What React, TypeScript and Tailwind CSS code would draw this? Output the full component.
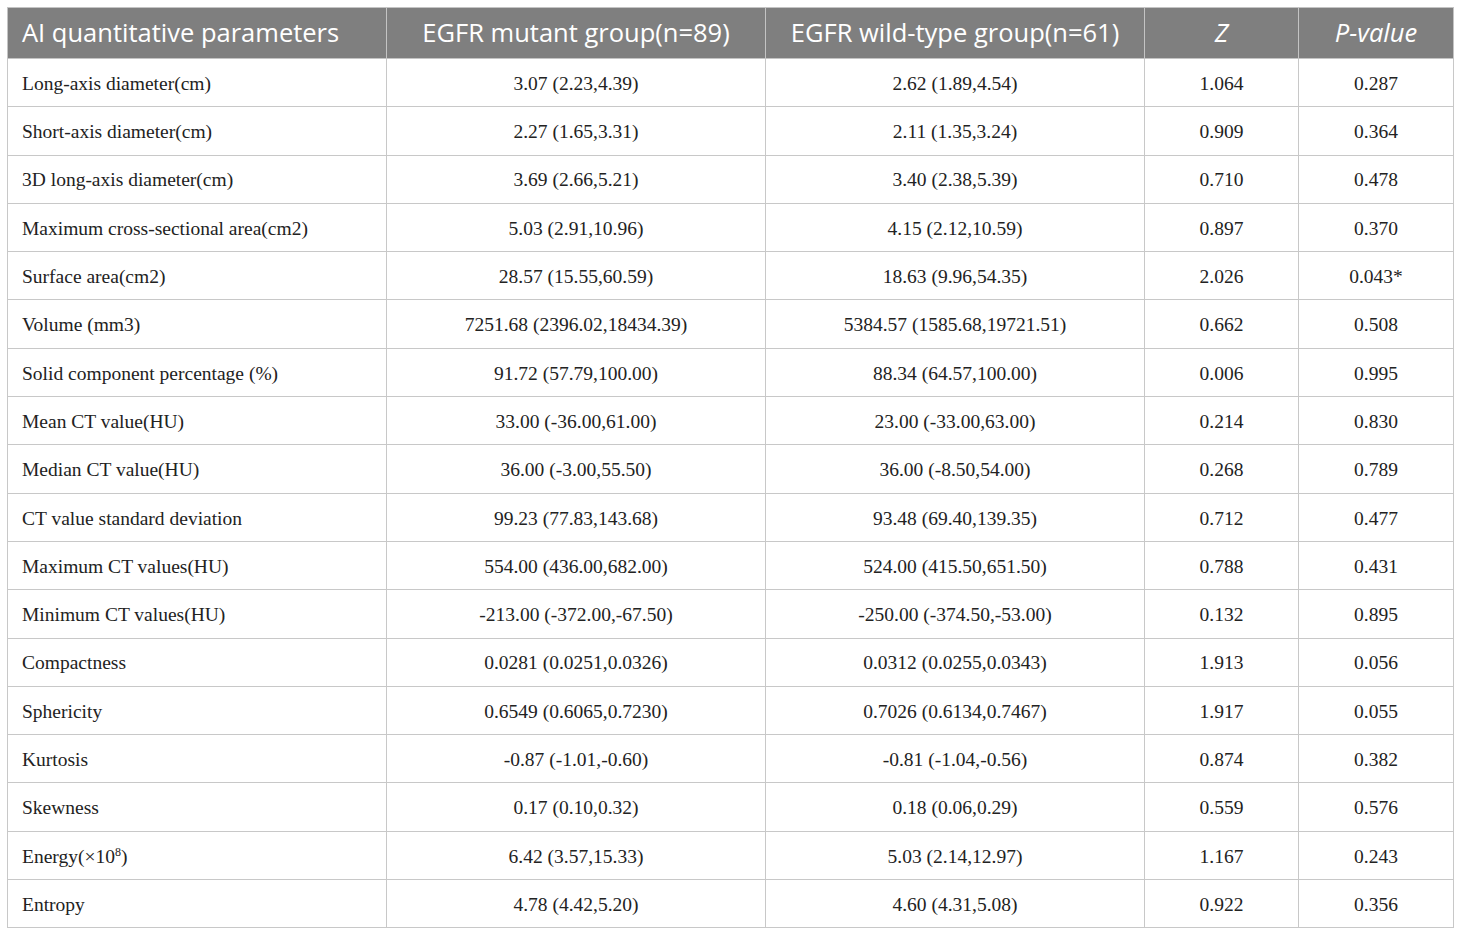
import React from "react";

const rows: [React.ReactNode, string, string, string, string][] = [
  ["Long-axis diameter(cm)", "3.07 (2.23,4.39)", "2.62 (1.89,4.54)", "1.064", "0.287"],
  ["Short-axis diameter(cm)", "2.27 (1.65,3.31)", "2.11 (1.35,3.24)", "0.909", "0.364"],
  ["3D long-axis diameter(cm)", "3.69 (2.66,5.21)", "3.40 (2.38,5.39)", "0.710", "0.478"],
  ["Maximum cross-sectional area(cm2)", "5.03 (2.91,10.96)", "4.15 (2.12,10.59)", "0.897", "0.370"],
  ["Surface area(cm2)", "28.57 (15.55,60.59)", "18.63 (9.96,54.35)", "2.026", "0.043*"],
  ["Volume (mm3)", "7251.68 (2396.02,18434.39)", "5384.57 (1585.68,19721.51)", "0.662", "0.508"],
  ["Solid component percentage (%)", "91.72 (57.79,100.00)", "88.34 (64.57,100.00)", "0.006", "0.995"],
  ["Mean CT value(HU)", "33.00 (-36.00,61.00)", "23.00 (-33.00,63.00)", "0.214", "0.830"],
  ["Median CT value(HU)", "36.00 (-3.00,55.50)", "36.00 (-8.50,54.00)", "0.268", "0.789"],
  ["CT value standard deviation", "99.23 (77.83,143.68)", "93.48 (69.40,139.35)", "0.712", "0.477"],
  ["Maximum CT values(HU)", "554.00 (436.00,682.00)", "524.00 (415.50,651.50)", "0.788", "0.431"],
  ["Minimum CT values(HU)", "-213.00 (-372.00,-67.50)", "-250.00 (-374.50,-53.00)", "0.132", "0.895"],
  ["Compactness", "0.0281 (0.0251,0.0326)", "0.0312 (0.0255,0.0343)", "1.913", "0.056"],
  ["Sphericity", "0.6549 (0.6065,0.7230)", "0.7026 (0.6134,0.7467)", "1.917", "0.055"],
  ["Kurtosis", "-0.87 (-1.01,-0.60)", "-0.81 (-1.04,-0.56)", "0.874", "0.382"],
  ["Skewness", "0.17 (0.10,0.32)", "0.18 (0.06,0.29)", "0.559", "0.576"],
  [
    <>
      Energy(×10<span className="text-[12px] relative -top-[7px]">8</span>)
    </>,
    "6.42 (3.57,15.33)",
    "5.03 (2.14,12.97)",
    "1.167",
    "0.243",
  ],
  ["Entropy", "4.78 (4.42,5.20)", "4.60 (4.31,5.08)", "0.922", "0.356"],
];

export default function App() {
  const th = "border border-[#c4c4c4] h-[51px] font-normal text-white text-[25.5px] leading-none";
  const td = "border border-[#c8c8c8] h-[48.3px] pt-[2px] text-[19.5px] text-[#222] leading-none";
  return (
    <div className="bg-white w-[1460px] h-[937px] pt-[7px] pl-[7px]">
      <table
        className="border-collapse table-fixed w-[1446px]"
        style={{ fontFamily: '"Liberation Serif", serif' }}
      >
        <colgroup>
          <col className="w-[379px]" />
          <col className="w-[379px]" />
          <col className="w-[379px]" />
          <col className="w-[154px]" />
          <col className="w-[155px]" />
        </colgroup>
        <thead>
          <tr className="bg-[#7f7f7f] [font-family:'Open_Sans',sans-serif]">
            <th className={`${th} text-left pl-[14px]`}>AI quantitative parameters</th>
            <th className={th}>EGFR mutant group(n=89)</th>
            <th className={th}>EGFR wild-type group(n=61)</th>
            <th className={`${th} italic`}>Z</th>
            <th className={`${th} italic`}>P-value</th>
          </tr>
        </thead>
        <tbody>
          {rows.map((r, i) => (
            <tr key={i}>
              <td className={`${td} text-left pl-[14px]`}>{r[0]}</td>
              <td className={`${td} text-center`}>{r[1]}</td>
              <td className={`${td} text-center`}>{r[2]}</td>
              <td className={`${td} text-center`}>{r[3]}</td>
              <td className={`${td} text-center`}>{r[4]}</td>
            </tr>
          ))}
        </tbody>
      </table>
    </div>
  );
}
